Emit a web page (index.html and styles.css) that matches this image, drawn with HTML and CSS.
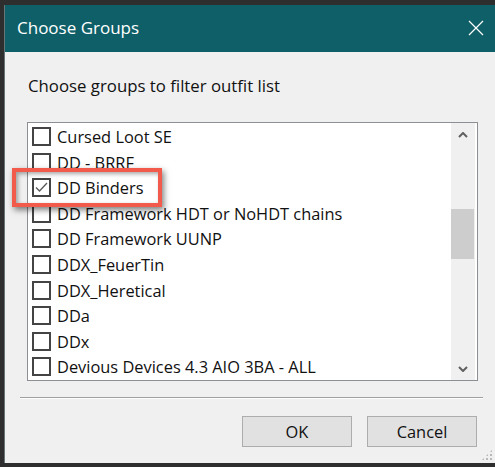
FILE: index.html
```html
<!DOCTYPE html>
<html lang="en">
<head>
    <meta charset="UTF-8">
    <meta name="viewport" content="width=device-width, initial-scale=1.0">
    <title>Choose Groups</title>
    <link rel="stylesheet" href="styles.css">
</head>
<body>
    <div class="window">
        <div class="titlebar">
            <span class="title">Choose Groups</span>
            <svg class="close" width="16" height="16" viewBox="0 0 16 16">
                <path d="M1 1 L15 15 M15 1 L1 15" stroke="#fff" stroke-width="1.2" fill="none"/>
            </svg>
        </div>

        <div class="client">
            <p class="prompt">Choose groups to filter outfit list</p>

            <div class="listbox">
                <ul class="items">
                    <li class="item"><span class="box"></span>Cursed Loot SE</li>
                    <li class="item"><span class="box"></span>DD - BRRF</li>
                    <li class="item"><span class="box checked">
                        <svg width="15" height="15" viewBox="0 0 15 15"><path d="M2 7.5 L5.5 11 L13 3" stroke="#5a5a5a" stroke-width="1.3" fill="none"/></svg>
                    </span>DD Binders</li>
                    <li class="item"><span class="box"></span>DD Framework HDT or NoHDT chains</li>
                    <li class="item"><span class="box"></span>DD Framework UUNP</li>
                    <li class="item"><span class="box"></span>DDX_FeuerTin</li>
                    <li class="item"><span class="box"></span>DDX_Heretical</li>
                    <li class="item"><span class="box"></span>DDa</li>
                    <li class="item"><span class="box"></span>DDx</li>
                    <li class="item"><span class="box"></span>Devious Devices 4.3 AIO 3BA - ALL</li>
                </ul>

                <div class="scrollbar">
                    <span class="arrow">
                        <svg width="10" height="6" viewBox="0 0 10 6"><path d="M1 5 L5 1 L9 5" stroke="#606060" stroke-width="2" fill="none"/></svg>
                    </span>
                    <div class="track"><div class="thumb"></div></div>
                    <span class="arrow">
                        <svg width="10" height="6" viewBox="0 0 10 6"><path d="M1 1 L5 5 L9 1" stroke="#606060" stroke-width="2" fill="none"/></svg>
                    </span>
                </div>
            </div>

            <hr class="separator">

            <div class="buttons">
                <button class="btn">OK</button>
                <button class="btn">Cancel</button>
            </div>

            <div class="grip"></div>
        </div>
    </div>

    <!-- annotation frame around the ticked entry -->
    <div class="callout"></div>
</body>
</html>
```

FILE: styles.css
```css
* {
    margin: 0;
    padding: 0;
    box-sizing: border-box;
}

body {
    font-family: "Open Sans", "Noto Sans", sans-serif;
    background: #2e2e2e;
    width: 495px;
    height: 467px;
    overflow: hidden;
    position: relative;
    padding: 5px 0 0 4px;
}

.window {
    width: 491px;
    height: 458px;
    display: flex;
    flex-direction: column;
    border-left: 1px solid #687476;
}

.titlebar {
    height: 47px;
    background: #0f5f68;
    display: flex;
    align-items: center;
    justify-content: space-between;
    padding: 0 11px 0 12px;
    color: #fff;
}

.title {
    font-size: 17px;
    margin-top: -2px;
}

.close {
    margin-top: -2px;
}

.client {
    flex: 1;
    background: #f0f0f0;
    position: relative;
    display: flex;
    flex-direction: column;
}

.prompt {
    font-size: 16.8px;
    line-height: 20px;
    color: #111;
    margin: 24px 0 0 23px;
}

.listbox {
    width: 451px;
    height: 259px;
    margin: 26px 0 0 22px;
    border: 1px solid #8c8f94;
    background: #fff;
    display: flex;
}

.items {
    list-style: none;
    flex: 1;
    padding: 1px 0 0 4px;
    overflow: hidden;
}

.item {
    height: 25.55px;
    display: flex;
    align-items: center;
    gap: 6px;
    font-size: 16.4px;
    color: #111;
    white-space: nowrap;
}

.box {
    width: 19px;
    height: 19px;
    border: 2px solid #444;
    flex-shrink: 0;
    display: flex;
    align-items: center;
    justify-content: center;
    background: #fff;
}

.scrollbar {
    width: 24px;
    margin-right: 2px;
    background: #f0f0f0;
    display: flex;
    flex-direction: column;
}

.arrow {
    height: 23px;
    display: flex;
    align-items: center;
    justify-content: center;
}

.track {
    flex: 1;
    padding-top: 63px;
}

.thumb {
    height: 50px;
    margin-right: 1px;
    background: #cdcdcd;
}

.separator {
    border: none;
    border-top: 1px solid #a0a0a0;
    border-bottom: 1px solid #fdfdfd;
    width: 463px;
    margin: 16px 0 0 15px;
}

.buttons {
    display: flex;
    justify-content: flex-end;
    gap: 15px;
    margin: 17px 18px 0 0;
}

.btn {
    width: 110px;
    height: 31px;
    background: #e1e1e1;
    border: 1px solid #adadad;
    font-family: inherit;
    font-size: 16.4px;
    color: #111;
}

.grip {
    position: absolute;
    right: 2px;
    bottom: 2px;
    width: 12px;
    height: 12px;
    background-image: radial-gradient(circle, #b8b8b8 1px, transparent 1.2px);
    background-size: 4px 4px;
    clip-path: polygon(100% 0, 100% 100%, 0 100%);
}

.callout {
    position: absolute;
    left: 12px;
    top: 168px;
    width: 150px;
    height: 39px;
    border: 4px solid #f25a4b;
    box-shadow: 2px 3px 6px rgba(0,0,0,0.5), inset 2px 2px 4px rgba(0,0,0,0.35);
}
```
